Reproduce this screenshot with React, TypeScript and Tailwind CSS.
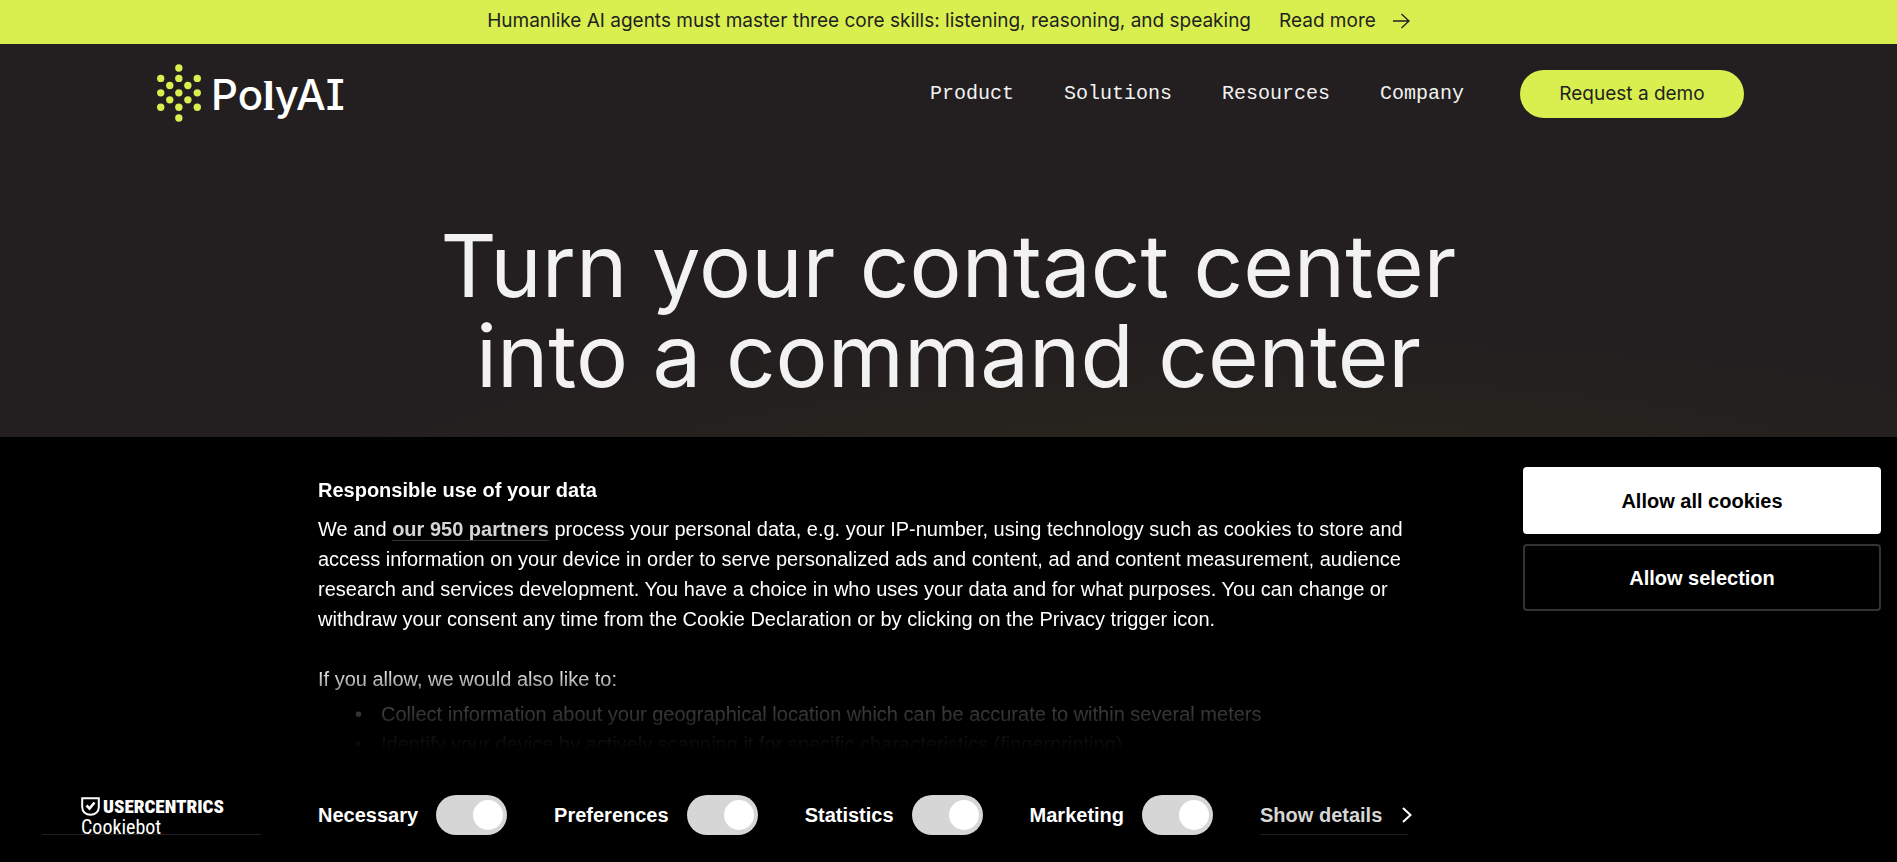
const navItems = ["Product", "Solutions", "Resources", "Company"];

const logoDots = [
  [115, 53], [61, 84], [115, 84], [170, 84], [88, 105], [142, 105],
  [61, 127], [115, 127], [170, 127], [88, 148], [142, 148],
  [61, 170], [115, 170], [170, 170], [115, 202],
];

function PolyLogo() {
  return (
    <a href="#home" aria-label="PolyAI" className="flex items-center gap-2.5 pb-0.5 text-white">
      <svg viewBox="50 41 131 173" className="h-[58px] w-11 fill-[#d9ef50]" aria-hidden="true">
        {logoDots.map(([x, y]) => (
          <circle key={`${x}-${y}`} cx={x} cy={y} r="11" />
        ))}
      </svg>
      <span className="pt-1 font-[Inter] text-[42px] leading-[54px] font-medium [font-feature-settings:'cv08']">
        Po<span className="font-['Liberation_Serif'] font-bold">l</span>yAI
      </span>
    </a>
  );
}

function Announcement() {
  return (
    <div className="flex h-11 items-center justify-center bg-[#d9ef50] pb-0.5 font-[Inter] text-[19px] leading-6">
      <p>Humanlike AI agents must master three core skills: listening, reasoning, and speaking</p>
      <a href="#read" className="ml-7 flex items-center gap-4">
        Read more
        <svg viewBox="0 0 18 16" className="h-4 w-[18px] fill-none stroke-current" aria-hidden="true">
          <path d="M1 8H17M9.500 1L17 8L9.500 15" strokeWidth="1.300" />
        </svg>
      </a>
    </div>
  );
}

function Header() {
  return (
    <header className="flex h-[100px] items-center justify-between pr-[153px] pl-[157px]">
      <PolyLogo />
      <div className="flex items-center gap-14">
        <nav className="flex gap-[50px] font-['Liberation_Mono'] text-xl text-[#f2f2f2]">
          {navItems.map((item) => (
            <a key={item} href={`#${item.toLowerCase()}`}>{item}</a>
          ))}
        </nav>
        <a href="#demo" className="flex h-12 w-56 items-center justify-center rounded-full bg-[#d9ef50] font-[Inter] text-[19px]">
          Request a demo
        </a>
      </div>
    </header>
  );
}

function UsercentricsLogo() {
  return (
    <a
      href="#cookiebot"
      aria-label="Usercentrics Cookiebot"
      className="ml-[42px] flex h-10 w-[219px] flex-col border-b border-[#231f20] pt-0.5 pl-[39px] font-['Roboto_Condensed','Liberation_Sans_Narrow',sans-serif] text-white"
    >
      <span className="flex items-center gap-[3px]">
        <svg viewBox="0 0 19 19" className="size-[19px] fill-none stroke-current" aria-hidden="true">
          <path d="M1.200 1.200H17.800V10C17.800 15 14 17.800 9.500 17.800S1.200 15 1.200 10Z" strokeWidth="2" />
          <path d="M5.500 8.500L8.500 11.500L13.500 5.500" strokeWidth="2.600" />
        </svg>
        <span className="text-[19px] leading-[19px] font-black">USERCENTRICS</span>
      </span>
      <span className="text-[20px] leading-[22px] font-normal">Cookiebot</span>
    </a>
  );
}

function Toggle({ label, locked = false }: { label: string; locked?: boolean }) {
  return (
    <label className="flex items-center gap-[18px]">
      {label}
      <input
        type="checkbox"
        role="switch"
        defaultChecked
        aria-readonly={locked}
        className="h-10 w-[71px] appearance-none rounded-full bg-[#d6d6d6] p-[5px] before:block before:size-[30px] before:rounded-full before:bg-white checked:before:ml-8"
      />
    </label>
  );
}

function CookieBanner() {
  return (
    <section
      aria-label="Cookie consent"
      className="fixed inset-x-0 bottom-0 bg-black pb-[27px] font-['Liberation_Sans',Arial,sans-serif] text-white"
    >
      <div className="flex pt-[30px] pr-4 pl-[318px]">
        <div className="h-[283px] flex-1 overflow-hidden pt-2 mask-[linear-gradient(to_bottom,black_200px,#0004_238px,#0003_248px,transparent_283px)]">
          <h2 className="text-[20px] leading-[30px] font-bold">Responsible use of your data</h2>
          <p className="mt-[9px] max-w-[1125px] text-[20px] leading-[30px]">
            We and{" "}
            <a href="#partners" className="border-b border-[#333] font-bold text-[#d6d6d6]">our 950 partners</a>{" "}
            process your personal data, e.g. your IP-number, using technology such as cookies to store and
            access information on your device in order to serve personalized ads and content, ad and content
            measurement, audience research and services development. You have a choice in who uses your data and
            for what purposes. You can change or withdraw your consent any time from the Cookie Declaration or by
            clicking on the Privacy trigger icon.
          </p>
          <p className="mt-[30px] text-[20px] leading-[30px]">If you allow, we would also like to:</p>
          <ul className="mt-[5px] pl-[37px] text-[20px] leading-[30px]">
            <li className="flex before:w-[26px] before:content-['•']">
              Collect information about your geographical location which can be accurate to within several meters
            </li>
            <li className="flex before:w-[26px] before:content-['•']">
              Identify your device by actively scanning it for specific characteristics (fingerprinting)
            </li>
          </ul>
        </div>
        <div className="flex w-[358px] flex-col gap-2.5 text-[20px] font-bold">
          <button type="button" className="h-[67px] rounded-sm bg-white text-black">Allow all cookies</button>
          <button type="button" className="h-[67px] rounded-sm border-2 border-[#333]">Allow selection</button>
        </div>
      </div>
      <div className="mt-[45px] flex items-center text-[20px] font-bold">
        <UsercentricsLogo />
        <div className="ml-[57px] flex items-center gap-[47px]">
          <Toggle label="Necessary" locked />
          <Toggle label="Preferences" />
          <Toggle label="Statistics" />
          <Toggle label="Marketing" />
          <a href="#details" className="flex h-10 w-[148px] items-center border-b border-[#231f20] text-[#d6d6d6]">
            <span className="flex-1">Show details</span>
            <svg viewBox="0 0 10 16" className="-mr-1 h-4 w-2.5 fill-none stroke-white" aria-hidden="true">
              <path d="M1 1L8.500 8L1 15" strokeWidth="2" />
            </svg>
          </a>
        </div>
      </div>
    </section>
  );
}

export default function App() {
  return (
    <div className="min-h-screen bg-[#231f20] text-[#231f20]">
      <Announcement />
      <Header />
      <main className="bg-[radial-gradient(ellipse_900px_130px_at_65%_320px,#28241b,transparent)] pt-[77px] pb-[200px]">
        <h1 className="text-center font-[Inter] text-[87px] leading-[90px] text-[#f2f2f2]">
          Turn your contact center
          <br />
          into a command center
        </h1>
      </main>
      <CookieBanner />
    </div>
  );
}
